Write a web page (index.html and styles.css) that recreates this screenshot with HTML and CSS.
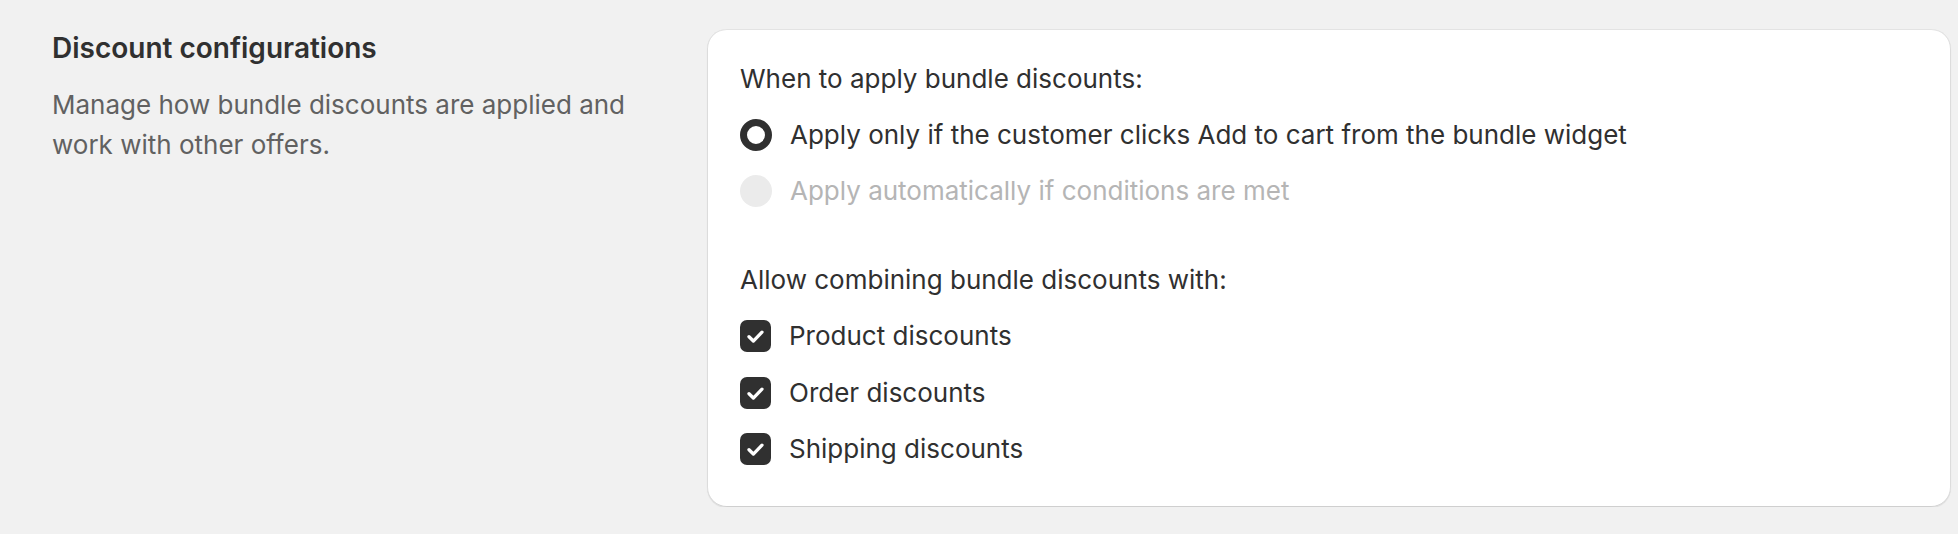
FILE: index.html
```html
<!DOCTYPE html>
<html lang="en">
<head>
<meta charset="utf-8">
<title>Discount configurations</title>
<link rel="stylesheet" href="styles.css">
</head>
<body>
<div class="section">
  <div class="intro">
    <h2 class="intro-title">Discount configurations</h2>
    <p class="intro-desc">Manage how bundle discounts are applied and work with other offers.</p>
  </div>
  <div class="card">
    <fieldset class="group">
      <legend class="group-label">When to apply bundle discounts:</legend>
      <label class="choice">
        <span class="radio radio-on"></span>
        <span class="choice-text">Apply only if the customer clicks Add to cart from the bundle widget</span>
      </label>
      <label class="choice choice-disabled">
        <span class="radio radio-disabled"></span>
        <span class="choice-text">Apply automatically if conditions are met</span>
      </label>
    </fieldset>
    <fieldset class="group group-second">
      <legend class="group-label">Allow combining bundle discounts with:</legend>
      <label class="choice">
        <span class="checkbox"><svg viewBox="0 0 32 32" width="32" height="32"><path d="M9.3 16.8 L13.8 21.2 L22.7 12" fill="none" stroke="#fff" stroke-width="3.4" stroke-linecap="round" stroke-linejoin="round"/></svg></span>
        <span class="choice-text">Product discounts</span>
      </label>
      <label class="choice">
        <span class="checkbox"><svg viewBox="0 0 32 32" width="32" height="32"><path d="M9.3 16.8 L13.8 21.2 L22.7 12" fill="none" stroke="#fff" stroke-width="3.4" stroke-linecap="round" stroke-linejoin="round"/></svg></span>
        <span class="choice-text">Order discounts</span>
      </label>
      <label class="choice">
        <span class="checkbox"><svg viewBox="0 0 32 32" width="32" height="32"><path d="M9.3 16.8 L13.8 21.2 L22.7 12" fill="none" stroke="#fff" stroke-width="3.4" stroke-linecap="round" stroke-linejoin="round"/></svg></span>
        <span class="choice-text">Shipping discounts</span>
      </label>
    </fieldset>
  </div>
</div>
</body>
</html>
```
FILE: styles.css
```css
html, body {
  margin: 0;
  padding: 0;
  background: #f1f1f1;
}
body {
  font-family: Inter, "Noto Sans", "Liberation Sans", sans-serif;
  color: #303030;
  font-size: 26px;
  line-height: 40px;
}
.section {
  display: flex;
  gap: 40px;
  padding: 29px 7px 0 52px;
}
.intro {
  width: 615px;
  flex: none;
}
.intro-title {
  margin: 0;
  font-size: 28px;
  font-weight: 600;
  line-height: 38px;
  color: #303030;
}
.intro-desc {
  margin: 18px 0 0;
  color: #616161;
}
.card {
  flex: 1;
  height: 478px;
  box-sizing: border-box;
  background: #fff;
  border-radius: 20px;
  padding: 30px 32px 0 33px;
  box-shadow: inset 0 1px 0 0 #e3e3e3, inset 1px 0 0 0 #dcdcdc, inset -1px 0 0 0 #dcdcdc, inset 0 -1px 0 0 #cfcfcf, 0 1px 1px 0 rgba(0,0,0,0.08);
}
.group {
  border: 0;
  margin: 0;
  padding: 0;
  display: flex;
  flex-direction: column;
  gap: 16px;
}
.group-second {
  margin-top: 49px;
  gap: 16.3px;
}
.group-label {
  padding: 0;
  float: left;
  width: 100%;
}
.choice {
  display: flex;
  align-items: center;
  gap: 18px;
}
.choice-disabled .choice-text {
  color: #b5b5b5;
}
.radio {
  width: 32px;
  height: 32px;
  border-radius: 50%;
  box-sizing: border-box;
  flex: none;
}
.radio-on {
  border: 7.5px solid #303030;
  background: #fff;
}
.radio-disabled {
  background: #ebebeb;
}
.checkbox {
  width: 31px;
  height: 32px;
  border-radius: 7px;
  background: #303030;
  flex: none;
  display: flex;
  align-items: center;
  justify-content: center;
}
.checkbox svg {
  display: block;
}
```
